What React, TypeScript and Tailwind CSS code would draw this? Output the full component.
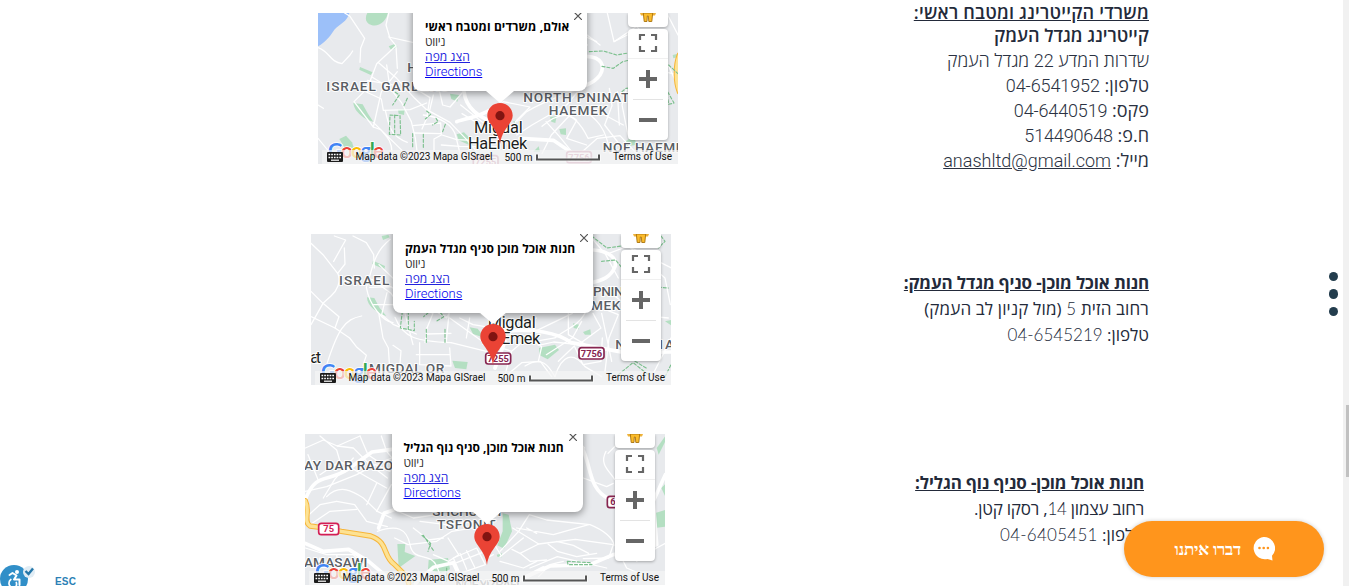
import React from "react";

type Label = { x: number; y: number; text: string; width: number; size?: number; color?: string; weight?: number };
type Half = {
  dx: number;
  dy: number;
  water?: string[];
  parks?: string[];
  roads: string[];
  wide?: string[];
  yellow?: string[];
  trails?: string[];
  labels: Label[];
  shields?: { x: number; y: number; w: number; h: number; text: string; color: string; faded?: boolean }[];
};

const mapOne: Half[] = [
  {
    dx: -8,
    dy: -8,
    water: ["M24 24H118C112 50 88 58 73 74C58 98 44 112 24 124Z"],
    parks: [
      "M172 24H234C230 46 206 68 184 60C166 54 164 38 172 24Z",
      "M236 124L256 116L262 126L244 136Z",
      "M150 186L188 202L182 210L148 194Z",
      "M130 294L158 298L174 326L190 350C166 346 132 320 130 294Z",
      "M264 314L284 312L282 330L266 326Z",
      "M88 402L108 392L126 412L132 430L104 428Z",
      "M420 266L448 270L442 290L424 282Z",
      "M440 388L462 382L490 410L486 424L446 406Z",
    ],
    roads: [
      "M24 128C60 140 58 170 96 176L120 150L128 138",
      "M104 24L120 34L164 100L152 130L150 172",
      "M24 300L40 310M24 400L62 446",
      "M236 24L228 60L240 100L258 122L200 176L172 250L132 290L190 366L212 374",
      "M236 96L308 112M258 124L262 190",
      "M204 172L260 220L314 280L350 314L420 352L470 404L500 440",
      "M186 216L240 250L274 292L304 350L316 400L322 446",
      "M172 226L260 242M230 180L240 250M262 200L214 260L190 366",
      "M150 252L214 282L220 316L300 314L350 294",
      "M212 374C230 396 244 404 246 440M190 352L276 436M226 316C238 376 250 396 292 412",
      "M308 362L392 354L394 390L372 402L372 446M312 384L392 386",
      "M314 250L360 278L350 340L336 372M370 270L358 320M388 256L398 300L420 306L456 264",
      "M340 330C392 336 430 360 438 396L450 446",
      "M452 300L490 330L566 390M456 326L512 360",
      "M396 390L440 404L570 410M394 420L450 424L570 426",
    ],
    wide: ["M462 260C468 310 508 340 566 356", "M440 350C470 340 530 330 560 300"],
    trails: ["M240 330L270 332L272 390L238 388Z", "M254 330V390M256 262L268 270L248 300M292 280L282 302", "M350 318L362 328L346 342M378 340L384 350L368 360M406 358L398 380", "M308 386V430M340 388V430"],
    labels: [
      { x: 49, y: 258, text: "ISRAEL GARDENS", width: 366 },
      { x: 292, y: 200, text: "HAMEYASDIM", width: 310 },
    ],
  },
  {
    dx: 172,
    dy: -8,
    parks: [
      "M404 410L432 394L440 420L406 424Z",
      "M180 336L200 334L196 354L184 350Z",
      "M208 372L228 370L228 390L212 388Z",
      "M130 440L146 424L150 440Z",
      "M68 350L82 344L80 356Z",
      "M548 150L564 146V156L550 160Z",
    ],
    roads: [
      "M226 24L240 50L330 120M250 40L260 92",
      "M260 92L292 120M280 92L320 110",
      "M352 24L372 110L412 90",
      "M372 110L440 64L530 170L562 240",
      "M240 262C196 278 160 290 110 320L60 370L20 400",
      "M0 252L44 300L20 350M40 290L120 306L76 350",
      "M80 390L126 360L230 300L260 264",
      "M156 364C196 330 232 320 260 346L230 400L290 420",
      "M204 330C234 324 266 340 294 400L340 390",
      "M168 350L208 394L250 446M240 330L184 390L156 446",
      "M270 310C320 338 350 370 360 446M300 320L344 330L400 360",
      "M358 250L366 302L344 360L390 420",
      "M382 260L388 360M410 250L396 300L414 390",
      "M270 446L322 400L390 392L440 446",
      "M430 150L480 190L564 210M530 24L564 90",
    ],
    wide: ["M290 154C336 156 346 184 330 210C314 234 280 246 230 258", "M90 400L190 406L250 446"],
    yellow: ["M568 150C556 180 556 230 568 260"],
    trails: ["M298 140L340 138L380 150L414 144M336 184L370 190L398 170L450 158L530 160", "M396 260L408 250L430 248M526 248L552 294L536 298L530 260M536 180L564 206"],
    labels: [
      { x: 100, y: 290, text: "NORTH PNINAT", width: 318 },
      { x: 176, y: 330, text: "HAEMEK", width: 176 },
      { x: 338, y: 442, text: "NOF HAEMEK", width: 270 },
      { x: -48, y: 385, text: "Migdal", width: 146, size: 49, color: "#1d1f22", weight: 400 },
      { x: -66, y: 432, text: "HaEmek", width: 178, size: 49, color: "#1d1f22", weight: 400 },
    ],
    shields: [
      { x: 228, y: 438, w: 78, h: 37, text: "7756", color: "#b0567c", faded: true },
      { x: -52, y: 450, w: 78, h: 36, text: "7255", color: "#b0567c", faded: true },
    ],
  },
];

const mapTwo: Half[] = [
  {
    dx: -8,
    dy: -6,
    parks: [
      "M210 98L246 114L244 124L208 108Z",
      "M192 208L214 210L230 240L250 264C222 256 192 234 192 208Z",
      "M326 228L342 226L344 242L328 238Z",
      "M236 24L256 20L260 28L240 36Z",
      "M484 180L506 186L500 200L484 194Z",
      "M500 298L524 302L546 330L510 318Z",
      "M448 398L494 402L490 424L456 420Z",
    ],
    roads: [
      "M24 46L60 80L104 136L126 108L124 60",
      "M94 24L128 36L92 100M150 24L190 44L212 80L214 120",
      "M262 34C210 74 208 126 190 178C200 234 240 280 270 284",
      "M24 190L60 226L24 290M60 226L108 266L96 300L140 330L160 356L190 382L180 412",
      "M24 266L96 300M176 264C126 274 104 296 60 446",
      "M228 260L240 330L256 360L260 420",
      "M104 136C116 160 102 188 84 204L60 226",
      "M228 110L286 166L352 230L440 270L552 350",
      "M206 154L264 196L306 256L330 350",
      "M212 230L276 230L340 200M200 178L264 176L310 208",
      "M252 194L236 260L272 290L340 318",
      "M276 268C300 330 340 340 444 344M370 318L444 316M372 300L366 344",
      "M360 240L390 256L372 300M390 244L430 270L456 226M440 236L430 340",
      "M350 344V410M350 410L444 414L440 360M340 380L440 380",
      "M270 352L294 368L290 420M444 344L550 370",
      "M470 270L510 290L570 300M500 270L490 330",
    ],
    wide: ["M478 180C500 230 538 260 570 274"],
    trails: ["M298 250L292 300L334 308L334 280M316 250V304", "M366 242L376 254L362 266M412 254L422 266L400 280M370 304V344M426 304V344"],
    labels: [
      { x: 108, y: 172, text: "ISRAEL GARDENS", width: 372 },
      { x: 22, y: 405, text: "at", width: 32, size: 49, color: "#1d1f22", weight: 400 },
      { x: 198, y: 436, text: "MIGDAL OR", width: 226 },
    ],
  },
  {
    dx: 174,
    dy: -6,
    parks: [
      "M162 360L210 350L222 366L188 394L164 382Z",
      "M540 280L558 276V292Z",
      "M264 286L282 290L282 304L266 300Z",
      "M294 312L316 304L318 320L300 320Z",
      "M20 260L32 270L18 280Z",
    ],
    roads: [
      "M320 30L362 80L400 150M362 80L430 54L540 150L556 230",
      "M0 256L64 310L120 304L154 270",
      "M20 350L80 370L60 440M80 370L150 310L262 256",
      "M110 330L150 340L210 330C244 300 274 300 300 256",
      "M160 352L206 342L280 350L348 300L324 256",
      "M184 380L262 330L290 280M250 256L250 320L306 352",
      "M220 400L268 354L294 410L348 400L352 330",
      "M324 230L400 260L372 330L360 430M350 256L380 400",
      "M210 446C230 380 264 370 300 416L350 446",
      "M60 446L110 404L166 400L200 446M140 336L170 356L160 400",
      "M120 414C176 380 194 420 210 446",
      "M370 190L410 220M410 256L550 270M440 60L560 120M500 446L544 360L558 330",
    ],
    wide: ["M326 66C376 70 396 92 390 116C378 148 350 158 320 164", "M0 320L60 310C140 300 220 314 258 344L420 374L558 372", "M30 420L60 340"],
    trails: ["M320 24L366 60L410 54L430 28M350 100L392 96L408 116", "M430 170L550 180M528 24L540 40L520 60M400 440L444 404L490 440M450 400L484 420M540 446L558 410"],
    labels: [
      { x: 324, y: 204, text: "PNINAT", width: 140 },
      { x: 318, y: 245, text: "MEK", width: 88 },
      { x: 391, y: 362, text: "NOF HA", width: 176 },
      { x: 8, y: 301, text: "Migdal", width: 144, size: 49, color: "#1d1f22", weight: 400 },
      { x: -10, y: 349, text: "HaEmek", width: 176, size: 49, color: "#1d1f22", weight: 400 },
    ],
    shields: [
      { x: 280, y: 357, w: 79, h: 38, text: "7756", color: "#862550" },
      { x: 0, y: 373, w: 79, h: 37, text: "7255", color: "#862550" },
    ],
  },
];

const mapThree: Half[] = [
  {
    dx: -5,
    dy: -6,
    parks: [
      "M292 348L316 348L314 372L346 384L296 420Z",
      "M386 396L444 390L450 424L420 436L384 424Z",
      "M340 454L364 452L362 466H338Z",
      "M554 360L570 370V400L556 388Z",
    ],
    roads: [
      "M16 60L70 36L112 54L180 24M60 24L110 66L120 100L60 140",
      "M112 54L160 60L210 110L262 150M180 24L204 80L240 104L276 90",
      "M16 190L80 176L170 140L226 110L270 130",
      "M120 100L206 150L260 180M160 90L104 154L70 210",
      "M80 206C120 166 160 190 190 210L232 250L274 270",
      "M110 220L164 230L200 280L262 296",
      "M16 270L60 230L110 220M30 290L90 250L170 244",
      "M230 166L200 230M274 170L230 250M244 24L260 70L276 90",
      "M232 310C290 290 320 300 330 350C340 404 390 370 410 414L430 466",
      "M284 330L324 350L410 340L456 310L520 300",
      "M340 300L386 336L430 330M360 280L440 290L530 280",
      "M460 390L530 360L556 410L480 436Z",
      "M480 376L500 424M500 368L524 418M470 404L546 374",
      "M444 330L476 380L446 400L400 380",
      "M16 360L80 380L160 380L230 446M110 380L120 446M180 390L160 446M44 446L60 390",
      "M294 250L340 270L410 260M24 80L56 160",
    ],
    wide: ["M16 214C50 130 80 166 144 124L216 72L276 64", "M16 346L70 370L146 364L206 400L260 446", "M236 300L252 256L286 244", "M346 466L400 418L460 404L480 446"],
    yellow: ["M16 218C32 250 8 280 30 294L60 298L124 310L212 324C268 344 246 384 284 410L320 446L326 466"],
    trails: ["M366 322L392 346L384 370M370 322L402 370M440 420V460"],
    labels: [
      { x: 12, y: 125, text: "AY DAR RAZON", width: 298 },
      { x: 12, y: 418, text: "AMASAWI", width: 190 },
      { x: 397, y: 264, text: "SHCHUNAT", width: 214 },
      { x: 411, y: 304, text: "TSFONIT", width: 176 },
      { x: 466, y: 484, text: "NOF YIZRAEL", width: 204, color: "#8d9095" },
    ],
    shields: [{ x: 54, y: 284, w: 64, h: 38, text: "75", color: "#d31e55" }],
  },
  {
    dx: 175,
    dy: -6,
    parks: [
      "M68 256L86 260L96 310L72 362L52 352L68 310Z",
      "M544 180L556 168V206Z",
      "M524 256L556 246V296L524 300Z",
      "M530 60L556 24V40L536 80Z",
      "M50 380L66 376V388L52 386Z",
    ],
    roads: [
      "M378 70C356 110 390 130 404 154M384 76L406 54",
      "M310 150L380 176L400 166M280 24L314 60",
      "M60 370L116 310L148 260L200 276L330 290C370 306 400 330 402 352",
      "M98 300L176 348L286 334L400 350L386 390L310 392",
      "M110 300L220 320L326 290M140 300L170 316",
      "M60 386L130 330M96 364L120 376L176 348M120 376L150 400L200 396",
      "M204 348L232 370L290 386L350 376M230 340L280 352L326 376",
      "M150 420L232 386L380 420M176 446L210 410L250 400",
      "M40 380L0 400M60 400L130 420L170 400M20 310L64 384",
      "M410 360L440 420L500 446M470 400L530 360L556 346",
    ],
    wide: ["M306 60C334 110 324 186 390 214", "M556 140L520 220L530 350L480 370L400 380L330 410L210 414L130 450", "M100 466L190 420"],
    trails: ["M262 400L330 404L336 410L264 410Z"],
    labels: [],
    shields: [{ x: 380, y: 203, w: 38, h: 38, text: "6", color: "#862550" }],
  },
];

function MapDrawing({ halves }: { halves: Half[] }) {
  const keyed = (list: string[] | undefined, props: React.SVGProps<SVGPathElement>) =>
    (list ?? []).map((d, i) => <path key={i} d={d} {...props} />);
  const line = { fill: "none", strokeLinejoin: "round" as const, strokeLinecap: "round" as const };
  return (
    <svg viewBox="0 0 360 151" className="absolute inset-0 h-full w-full bg-[#e8eaed]" fontFamily="Roboto, sans-serif">
      <defs>
        <clipPath id="west"><rect width="182" height="151" /></clipPath>
        <clipPath id="east"><rect x="182" width="178" height="151" /></clipPath>
      </defs>
      {halves.map((h, n) => (
        <g key={n} clipPath={n === 0 ? "url(#west)" : "url(#east)"}>
          <g transform={`translate(${h.dx} ${h.dy}) scale(0.33333)`}>
            {keyed(h.water, { fill: "#9cc0f9" })}
            {keyed(h.parks, { fill: "#b4dfc2" })}
            {keyed(h.roads, { ...line, stroke: "#fff", strokeWidth: 3.8 })}
            {keyed(h.wide, { ...line, stroke: "#fff", strokeWidth: 11 })}
            {keyed(h.yellow, { ...line, stroke: "#f6b53a", strokeWidth: 16 })}
            {keyed(h.yellow, { ...line, stroke: "#fde293", strokeWidth: 10 })}
            {keyed(h.trails, { ...line, stroke: "#7cc08e", strokeWidth: 3.4, strokeDasharray: "9 6" })}
          </g>
        </g>
      ))}
      {halves.map((h, n) => (
        <g key={n} transform={`translate(${h.dx} ${h.dy}) scale(0.33333)`}>
          {(h.shields ?? []).map((s) => (
            <g key={s.text} opacity={s.faded ? 0.65 : 1}>
              <rect x={s.x + 2} y={s.y + 2} width={s.w - 4} height={s.h - 4} rx="8" fill="#fff" stroke={s.color} strokeWidth="5" />
              <text x={s.x + s.w / 2} y={s.y + 29} textAnchor="middle" fontSize="28" fontWeight="700" fill={s.color}>{s.text}</text>
            </g>
          ))}
          {h.labels.map((l) => (
            <text key={l.text} x={l.x} y={l.y} textLength={l.width} fontSize={l.size ?? 41} fontWeight={l.weight ?? 500}
              fill={l.color ?? "#5a5e64"} stroke="#fff" strokeWidth="6" strokeLinejoin="round" paintOrder="stroke">{l.text}</text>
          ))}
        </g>
      ))}
    </svg>
  );
}

function Attribution() {
  return (
    <svg viewBox="0 0 360 151" className="absolute inset-0 h-full w-full" fontFamily="Roboto, sans-serif">
      <text x="10" y="145" textLength="56" fontFamily="Lato, sans-serif" fontSize="20.5" fontWeight="700" stroke="#fff" strokeWidth="1.6" paintOrder="stroke">
        <tspan fill="#4285f4">G</tspan><tspan fill="#ea4335">o</tspan><tspan fill="#fbbc04">o</tspan>
        <tspan fill="#4285f4">g</tspan><tspan fill="#34a853">l</tspan><tspan fill="#ea4335">e</tspan>
      </text>
      <rect x="4" y="137" width="356" height="14" fill="#f5f5f5" fillOpacity="0.7" />
      <g>
        <rect x="9" y="139" width="16" height="10" rx="1" fill="#1c1c1c" />
        <path d="M10.500 141.500H24M10.500 144.500H24" stroke="#fff" strokeWidth="1.700" strokeDasharray="1.700 1" />
        <path d="M13 147.200H21" stroke="#fff" strokeWidth="1.200" />
      </g>
      <g fontSize="10" fill="#111">
        <text x="37.500" y="147" textLength="137">Map data ©2023 Mapa GISrael</text>
        <text x="186.500" y="148" textLength="28">500 m</text>
        <text x="295" y="147" textLength="59">Terms of Use</text>
      </g>
      <path d="M219 141.500V146.500H281V141.500" fill="none" stroke="#fff" strokeWidth="4" opacity=".6" />
      <path d="M219 141.500V146.500H281V141.500" fill="none" stroke="#555" strokeWidth="2" />
    </svg>
  );
}

function Controls() {
  return (
    <div className="absolute left-[310px] top-0 w-10">
      <div className="flex h-3.5 justify-center rounded-b-sm bg-white shadow-[0_1px_3px_rgba(0,0,0,.3)]">
        <svg width="18" height="10" viewBox="0 0 18 10">
          <path d="M1 0H17L16 2.500H2Z" fill="#efb33b" />
          <path d="M4.300 0H13.700L12.800 8.500H9.800L9.300 3H8.300L8 8.500H5.200Z" fill="#fbbc2c" stroke="#a8720c" strokeWidth=".9" />
        </svg>
      </div>
      <div className="mt-0.5 flex h-[111px] flex-col items-center rounded-sm bg-white shadow-[0_1px_3px_rgba(0,0,0,.3)]">
        <svg width="40" height="111" viewBox="0 16 40 111" fill="none" stroke="#666" strokeWidth="2.2">
          <path d="M0 45.5H40" stroke="#f0f0f0" strokeWidth="1" />
          <path d="M12 27V22H17M23 22H28V27M28 33V38H23M17 38H12V33" />
          <path d="M20 57V75M11 66H29M11 107H29" strokeWidth="4" />
          <path d="M5 86.5H35" stroke="#e3e3e3" strokeWidth="1" />
        </svg>
      </div>
    </div>
  );
}

function MapCard({ halves, title, bubble, titleClass, closeClass }: { halves: Half[]; title: string; bubble: string; titleClass: string; closeClass: string }) {
  return (
    <div className="relative h-[151px] w-[360px] shrink-0 overflow-hidden">
      <MapDrawing halves={halves} />
      <div className={`absolute -top-3 rounded-lg bg-white pl-3 shadow-[0_2px_7px_1px_rgba(0,0,0,.35)] ${bubble}`}>
        <div className="flex flex-col items-start text-[12px] leading-[15px] text-black">
          <b className={`whitespace-nowrap font-bold ${titleClass}`} dir="rtl">{title}</b>
          <span className="tracking-[-0.3px] text-[#333]" dir="rtl">ניווט</span>
          <a className="tracking-[0.1px] text-[#2222dd] underline" dir="rtl">הצג מפה</a>
          <a className="font-[Roboto] text-[13px] font-light tracking-[0px] text-[#0000ee] underline">Directions</a>
        </div>
      </div>
      <svg viewBox="0 0 28 15" className="absolute left-[168px] top-[77px] h-[15px] w-7"><path d="M0 0H28V1L14 13L0 1Z" fill="#fff" /></svg>
      <svg viewBox="0 0 26 41" className="absolute left-[168.5px] top-[90px] h-[41px] w-[26px]">
        <path d="M13 0C5.8 0 .3 5.5.3 12.6C.3 21 10.8 25.500 13 41C15.200 25.500 25.700 21 25.700 12.600C25.700 5.500 20.200 0 13 0Z" fill="#ea4335" />
        <circle cx="13" cy="12.700" r="4.600" fill="#811411" />
      </svg>
      <svg viewBox="0 0 8 8" className={`absolute h-2 w-2 ${closeClass}`}><path d="M0 0L8 8M8 0L0 8" stroke="#555" strokeWidth="1.2" /></svg>
      <Attribution />
      <Controls />
    </div>
  );
}

export default function App() {
  return (
    <div className="relative flex h-[586px] w-full overflow-hidden bg-white font-['Open_Sans','Noto_Sans',sans-serif] text-[#232a3a]">
      <main className="flex min-w-0 flex-1 flex-col">
        <section className="flex h-[234px] items-start justify-between pl-[318px] pr-[194px]">
          <div className="pt-[13px]">
            <MapCard halves={mapOne} title="אולם, משרדים ומטבח ראשי" bubble="left-[95px] h-[90px] w-[174px] pt-[18px]" titleClass="tracking-[0.1px]" closeClass="left-[256px] top-[-1px]" />
          </div>
          <div dir="rtl" className="whitespace-nowrap text-[18px] leading-[25px]">
            <h2 className="h-6 font-semibold tracking-[0.22px] underline">משרדי הקייטרינג ומטבח ראשי:</h2>
            <div className="-mt-px text-[#2b3242]">
              <p className="font-semibold text-[#232a3a]">קייטרינג מגדל העמק</p>
              <p className="font-light tracking-[-0.05px]">שדרות המדע <span className="font-[Roboto]">22</span> מגדל העמק</p>
              <p><span className="font-medium">טלפון:</span> <span className="font-[Roboto] font-light tracking-[-0.1px]">04-6541952</span></p>
              <p><span className="font-medium">פקס:</span> <span className="font-[Roboto] font-light tracking-[-0.15px]">04-6440519</span></p>
              <p><span className="font-medium">ח.פ:</span> <span className="font-[Roboto] font-light tracking-[-0.15px]">514490648</span></p>
              <p><span className="font-medium">מייל:</span> <a className="font-[Roboto] font-light underline">anashltd@gmail.com</a></p>
            </div>
          </div>
        </section>
        <section className="flex h-[200px] items-start justify-between pl-[311px] pr-[194px]">
          <MapCard halves={mapTwo} title="חנות אוכל מוכן סניף מגדל העמק" bubble="left-[82px] h-[91px] w-[200px] pt-[19px]" titleClass="tracking-[0.05px]" closeClass="left-[269px] top-[0px]" />
          <div dir="rtl" className="whitespace-nowrap pt-9 text-[17px] leading-[26px]">
            <h2 className="font-bold tracking-[-0.13px] underline">חנות אוכל מוכן- סניף מגדל העמק:</h2>
            <p className="tracking-[0.14px]">רחוב הזית <span className="font-[Lato] font-light">5</span> (מול קניון לב העמק)</p>
            <p>טלפון: <span className="font-[Lato] font-light">04-6545219</span></p>
          </div>
        </section>
        <section className="flex h-[152px] items-start justify-between pl-[305px] pr-[199px]">
          <MapCard halves={mapThree} title="חנות אוכל מוכן, סניף נוף הגליל" bubble="left-[86.5px] h-[90px] w-[191px] pt-[18px]" titleClass="tracking-[0px]" closeClass="left-[264px] top-[-1px]" />
          <div dir="rtl" className="whitespace-nowrap pt-9 text-[17px] leading-[26px]">
            <h2 className="font-bold tracking-[-0.11px] underline">חנות אוכל מוכן- סניף נוף הגליל:</h2>
            <p className="tracking-[-0.22px]">רחוב עצמון <span className="font-[Lato] font-light">14</span>, רסקו קטן.</p>
            <p>טלפון: <span className="font-[Lato] font-light tracking-[0.25px]">04-6405451</span></p>
          </div>
        </section>
      </main>
      <aside className="w-1.5 bg-[#f1f1f1] pl-[3px] pt-[405px]"><div className="h-[72px] bg-[#c1c1c1]" /></aside>

      <nav className="absolute right-[11px] top-[272px] flex flex-col gap-2">
        <i className="size-[9.4px] rounded-full bg-[#233d4d]" />
        <i className="size-[9.4px] rounded-full bg-[#233d4d]" />
        <i className="size-[9.4px] rounded-full bg-[#233d4d]" />
      </nav>
      <button dir="rtl" className="absolute left-[1124px] top-[521px] flex h-14 w-[200px] items-center gap-[11px] rounded-full bg-[#ff951c] pr-[49px] text-white shadow-[0_0_4px_rgba(0,0,0,.2)]">
        <svg width="23" height="24" viewBox="0 0 23 24">
          <path d="M11.500 0A11.200 11.200 0 1 0 15.500 22L20.500 23.500L20 18.800A11.200 11.200 0 0 0 11.500 0Z" fill="#fff" />
          <g fill="#ff951c"><circle cx="7.500" cy="11" r="1.300" /><circle cx="11.700" cy="11" r="1.300" /><circle cx="15.900" cy="11" r="1.300" /></g>
        </svg>
        <span className="whitespace-nowrap pt-px font-['Liberation_Serif'] text-[17px] font-bold tracking-[-0.25px]">דברו איתנו</span>
      </button>
      <div className="absolute left-0 top-[565px] flex">
        <svg width="36" height="21" viewBox="0 0 36 21">
          <circle cx="14" cy="14" r="14" fill="#318fc8" />
          <circle cx="29" cy="7" r="6" fill="#e1edf5" />
          <path d="M25.500 6L28.500 9L33 3.500" fill="none" stroke="#2576a8" strokeWidth="2.400" />
          <circle cx="17" cy="7" r="2" fill="#fff" />
          <g fill="none" stroke="#fff" strokeWidth="2" strokeLinecap="round" strokeLinejoin="round">
            <path d="M9.500 10L12.500 8L16.500 10.500L14 14.500H19.500V20" />
            <path d="M10.800 14.500A4.600 4.600 0 0 0 11 22M15.500 22A4.600 4.600 0 0 0 16.300 17.500" strokeWidth="1.700" />
          </g>
        </svg>
        <span className="pl-[19px] pt-[11px] font-['Liberation_Sans'] text-[10px] font-bold leading-[12px] tracking-[0.2px] text-[#2b7fb5]">ESC</span>
      </div>
    </div>
  );
}
